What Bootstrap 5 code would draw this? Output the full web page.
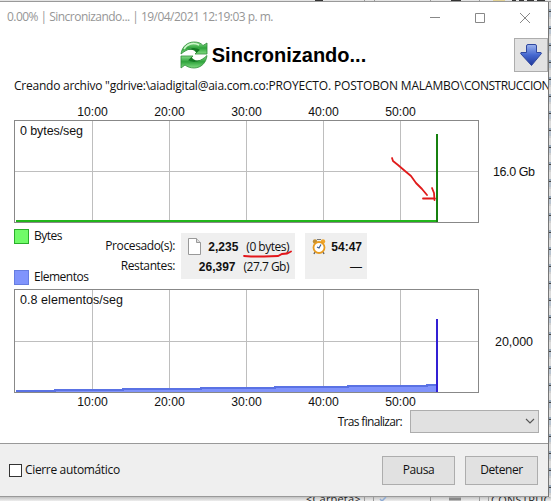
<!DOCTYPE html>
<html lang="es">
<head>
<meta charset="utf-8">
<meta name="viewport" content="width=device-width, initial-scale=1">
<title>Sincronizando...</title>
<link href="https://cdn.jsdelivr.net/npm/bootstrap@5.3.0/dist/css/bootstrap.min.css" rel="stylesheet">
<style>
body{width:551px;height:501px;overflow:hidden;font:12px/16px "Open Sans","Noto Sans",sans-serif;letter-spacing:-.5px;color:#111;background:#fff}
svg{display:block;flex:none}
.desk{width:551px;height:501px}
.behind-top{height:2px;background:#e4e4e4;border-bottom:1px solid #999}
.behind-right{width:3px;background:repeating-linear-gradient(#dcdcdc 0 7px,#9ab 7px 9px,#444 9px 10px,#b9c4d0 10px 15px,#cfcfcf 15px 17px);border-left:1px solid #777}
.behind-bottom{height:4px;background:linear-gradient(#c2c2c2,#eee)}
.win{width:548px;height:495px}
.titlebar{height:30px;color:#969696;padding-left:7px}
.titlebar span{letter-spacing:-.53px}
.hero{height:42px;padding:4px 2px 0 0}
.hero h1{font:bold 20px/24px "Liberation Sans",Arial,sans-serif;letter-spacing:0;color:#000}
.down-btn{width:34px;height:34px;background:#e2e2e2;border:1px solid #adadad;border-radius:0;right:0;top:6px}
.message{width:551px;height:28px;padding:4px 0 0 14px;white-space:nowrap;letter-spacing:-.16px}
.message .drive{letter-spacing:-.24px}
.message .folder{letter-spacing:-.5px}
.plot text{font:12.5px "Liberation Sans",Arial,sans-serif;letter-spacing:0;fill:#111}
.plot .time text{font-size:12.2px}
.stats{height:64px;padding-left:14px}
.legend{width:82px;padding:4px 0 3px}
.legend span{padding-left:5px}
.swatch{width:15px;height:15px;border:1px solid #2bad2b;background:#70fb68}
.swatch-items{border-color:#667de0;background:#8094fc}
.rowlabels{width:79px;line-height:20px;padding-top:12px;letter-spacing:-.38px}
.tile{background:#efefef;height:46px;margin-top:9px;line-height:20px}
.tile-a{width:114px;margin-left:6px;padding:3px 6px 0 7px}
.tile-b{width:62px;margin-left:10px;padding:3px 5px 0 7px}
.tile b{font:bold 12px/20px "Liberation Sans",Arial,sans-serif;letter-spacing:0}
.tile b,.tile span{position:relative;top:1px}
.ink{left:228px;top:22px}
.finish{height:34px;padding:1px 9px 0 0}
.finish span{letter-spacing:-.68px}
.pick{width:129px;height:23px;background:#e1e1e1;border:1px solid #adadad;padding-right:3px}
.foot{background:#efefef;border-top:1px solid #999;border-bottom:1px solid #999;height:54px;padding:0 10px 0 9px}
.foot span{letter-spacing:-.34px}
.tick{width:13px;height:13px;border:1px solid #333;background:#fff;margin-right:3px}
.foot .btn{--bs-btn-padding-y:0;--bs-btn-padding-x:0;width:73px;height:29px;font-size:12px;line-height:16px;letter-spacing:-.45px;background:#e1e1e1;border:1px solid #adadad;border-radius:0;color:#111}
.foot .btn+.btn{margin-left:10px}
</style>
<script src="https://cdn.jsdelivr.net/npm/bootstrap@5.3.0/dist/js/bootstrap.bundle.min.js"></script>
</head>
<body>
<div class="desk d-flex flex-column">
  <div class="behind-top flex-shrink-0 overflow-hidden"><svg width="551" height="2"><path d="M315 .5h8M451 .5h10M512 .5h4M519 .5h5M527 .5h7M537 .5h8" stroke="#333"/><path d="M364.500 0v2M374.500 0v2M430.500 0v2M479.500 0v2" stroke="#999"/><path d="M493 .5h12" stroke="#e2d193"/></svg></div>
  <div class="d-flex">
    <main class="win d-flex flex-column flex-shrink-0 bg-white">
      <header class="titlebar d-flex align-items-center flex-shrink-0">
        <span>0.00% | Sincronizando... | 19/04/2021 12:19:03 p. m.</span>
        <svg class="ms-auto" width="118" height="30" fill="none" stroke="#888"><path d="M0 15.500h10M45.500 11.500h9v9h-9zM90 11l10 10m0-10L90 21"/></svg>
      </header>
      <section class="hero position-relative d-flex justify-content-center align-items-center flex-shrink-0">
        <svg class="me-1" width="28" height="28" viewBox="0 0 28 28">
          <defs><linearGradient id="gr" x2="0" y2="1"><stop stop-color="#8fe08f"/><stop offset=".5" stop-color="#2fa33c"/><stop offset="1" stop-color="#83dd83"/></linearGradient></defs>
          <g fill="url(#gr)" stroke="#2d8b37" stroke-width=".8" stroke-linejoin="round">
          <path d="M1 13C2 5 8 1 14 1c4 0 7 1 9 3.500L27 2v11H15l4-4C13 6 7 8 1 13z"/>
          <path d="M27 14.500c-1 8-6 12-12.500 12.500-4 0-7-1-9.500-3L1 27V15h12l-4 4.200c6 2.800 12 1 18-4.700z"/></g>
          <path d="M4 8c3-5 9-7 15-4" fill="none" stroke="#cff5cc" stroke-width="1.500"/>
          <path d="M16.500 12 20 8.700C16 6.500 12 6.500 8 9c4-1 7 0 8.500 3zM11.500 16 8.200 19.300c4 2.200 8 2.200 12-.3-4 1-7 0-8.700-3z" fill="#147a24"/>
        </svg>
        <h1 class="m-0">Sincronizando...</h1>
        <button class="down-btn position-absolute p-0 d-flex align-items-center justify-content-center" aria-label="Minimizar">
          <svg width="24" height="24" viewBox="0 0 24 24"><defs><linearGradient id="bl" x2="0" y2="1"><stop stop-color="#9db4ee"/><stop offset=".5" stop-color="#4668d0"/><stop offset="1" stop-color="#20389a"/></linearGradient></defs><path d="M7.500 3q0-1.500 1.500-1.500h7q1.500 0 1.500 1.500v6.500h4.500q1 .5 0 1.500L12.500 22.500 2 11q-.8-1 0-1.500h5.500z" fill="url(#bl)" stroke="#2f479f"/></svg>
        </button>
      </section>
      <p class="message m-0 flex-shrink-0"><span class="drive">Creando archivo "gdrive:\aiadigital@aia.com.co:</span>PROYECTO. POSTOBON MALAMBO\<span class="folder">CONSTRUCCION</span></p>
      <svg class="plot" width="548" height="122" viewBox="0 102 548 122">
        <g class="time" text-anchor="middle"><text x="92.500" y="116">10:00</text><text x="169.500" y="116">20:00</text><text x="246.500" y="116">30:00</text><text x="323.500" y="116">40:00</text><text x="400.500" y="116">50:00</text></g>
        <path d="M92.500 121v101M169.500 121v101M246.500 121v101M323.500 121v101M400.500 121v101M15 171.500h463" stroke="#bebebe"/>
        <rect x="14.500" y="120.500" width="464" height="102" fill="none" stroke="#888"/>
        <path d="M16 221h421" stroke="#21b51a" stroke-width="2"/>
        <path d="M437 134v88" stroke="#16800f" stroke-width="2"/>
        <text x="20" y="135" textLength="63">0 bytes/seg</text>
        <text x="493" y="176" textLength="42">16.0 Gb</text>
        <path d="m392 158 1 3 5 4 7 6 6 5 5 7 6 6 5 6M423 198.500h12M432 188l2 5 .500 7" fill="none" stroke="#e01b1b" stroke-width="1.800" stroke-linecap="round" stroke-linejoin="round"/>
      </svg>
      <section class="stats d-flex position-relative flex-shrink-0">
        <div class="legend d-flex flex-column justify-content-between">
          <div class="d-flex align-items-center"><i class="swatch"></i><span>Bytes</span></div>
          <div class="d-flex align-items-center"><i class="swatch swatch-items"></i><span>Elementos</span></div>
        </div>
        <div class="rowlabels text-end text-nowrap"><div>Procesado(s):</div><div>Restantes:</div></div>
        <div class="tile tile-a">
          <div class="d-flex align-items-center"><svg width="13" height="17" viewBox="0 0 13 17"><path d="M.5.500h8l4 4v12H.500z" fill="#fff" stroke="#999"/><path d="M8.500.500v4h4" fill="#ddd" stroke="#999"/></svg><b class="ms-auto">2,235</b><span class="ps-2">(0 bytes)</span></div>
          <div class="d-flex justify-content-end"><b>26,397</b><span class="ps-1 ms-1">(27.7 Gb)</span></div>
        </div>
        <div class="tile tile-b">
          <div class="d-flex align-items-center justify-content-between"><svg width="14" height="17" viewBox="0 0 14 17"><path d="m3 14-1 2m9-2 1 2" stroke="#666" stroke-width="1.500"/><circle cx="3" cy="3.500" r="2.200" fill="#bf8f35"/><circle cx="11" cy="3.500" r="2.200" fill="#f0a52a"/><path d="M5 1.500h4" stroke="#777"/><circle cx="7" cy="9.500" r="5.500" fill="#fff" stroke="#e79b20" stroke-width="1.800"/><path d="M9 6.500 7 10l-2-1" fill="none" stroke="#355b94" stroke-width="1.200"/></svg><b>54:47</b></div>
          <div class="text-end"><b class="fw-normal">—</b></div>
        </div>
        <svg class="ink position-absolute" width="66" height="14"><path d="M16 10l7 .5h13l14-.5 4-2 5-.5 4-2" fill="none" stroke="#e3161b" stroke-width="1.800" stroke-linecap="round"/></svg>
      </section>
      <svg class="plot" width="548" height="121" viewBox="0 288 548 121">
        <path d="M92.500 290v102M169.500 290v102M246.500 290v102M323.500 290v102M400.500 290v102M15 341.500h463" stroke="#bebebe"/>
        <path d="M16 392v-2h39v-1h68v-1h78v-1h74v-1h73v-1h79v-1h10v8z" fill="#8093fb"/>
        <path d="M16 391h39v-1h68v-1h78v-1h74v-1h73v-1h79v-1h10" fill="none" stroke="#5a72e4" stroke-width="2"/>
        <rect x="14.500" y="289.500" width="464" height="103" fill="none" stroke="#888"/>
        <path d="M437 319v73" stroke="#3220d4" stroke-width="2"/>
        <text x="20" y="304" textLength="103">0.8 elementos/seg</text>
        <text x="495" y="346" textLength="38">20,000</text>
        <g class="time" text-anchor="middle"><text x="92.500" y="406">10:00</text><text x="169.500" y="406">20:00</text><text x="246.500" y="406">30:00</text><text x="323.500" y="406">40:00</text><text x="400.500" y="406">50:00</text></g>
      </svg>
      <section class="finish d-flex justify-content-end flex-shrink-0"><span class="pt-1 pe-2">Tras finalizar:</span>
        <div class="pick d-flex align-items-center justify-content-end" role="combobox" aria-label="Tras finalizar"><svg width="10" height="7" fill="none" stroke="#555" stroke-width="1.100"><path d="m1 1 4 4 4-4"/></svg></div>
      </section>
      <footer class="foot d-flex align-items-center flex-shrink-0">
        <i class="tick"></i><span>Cierre automático</span>
        <button class="btn ms-auto">Pausa</button><button class="btn">Detener</button>
      </footer>
    </main>
    <div class="behind-right flex-shrink-0"></div>
  </div>
  <div class="behind-bottom flex-shrink-0 overflow-hidden"><svg width="551" height="4"><g font-family="Open Sans,sans-serif" font-size="11" fill="#222"><text x="306" y="6" textLength="54">&lt;Carpeta&gt;</text><text x="491" y="7" textLength="59">CONSTRUC</text></g><path d="M364.500 0v4M373.500 0v4M430.500 0v4M479.500 0v4M488.500 0v4" stroke="#999"/><path d="M449 2h12" stroke="#888" stroke-width="3"/><path d="m380 2 2 2 4-4" fill="none" stroke="#8eabd4" stroke-width="1.500"/></svg></div>
</div>
</body>
</html>
